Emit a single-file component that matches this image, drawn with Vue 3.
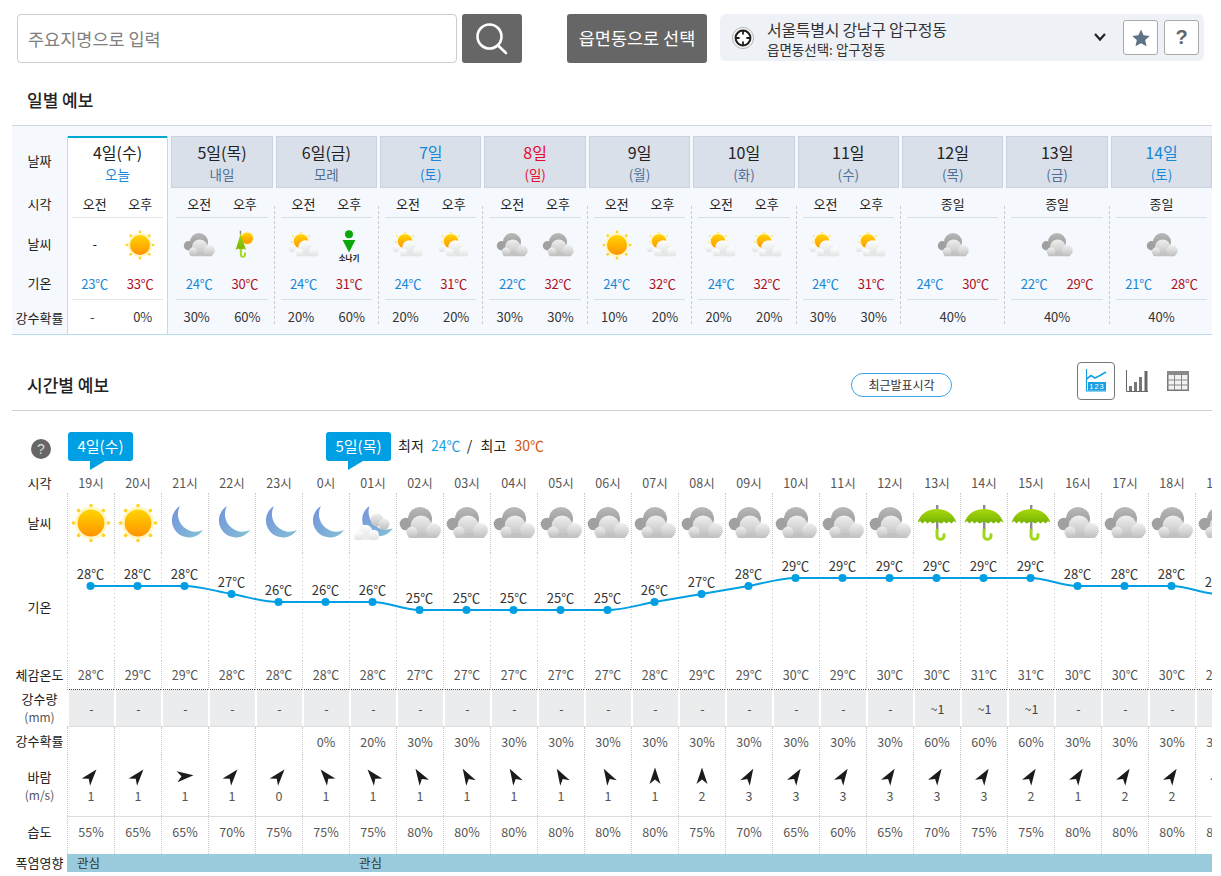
<template>
  <div class="page">
    <!-- shared icon symbols -->
    <svg class="defs" aria-hidden="true">
      <defs>
        <linearGradient id="g-sun" x1="0" y1="0" x2="0" y2="1">
          <stop offset="0" stop-color="#ffd500" />
          <stop offset="1" stop-color="#ff9300" />
        </linearGradient>
        <linearGradient id="g-moon" x1="0" y1="0" x2="1" y2="0.7">
          <stop offset="0" stop-color="#7593dc" />
          <stop offset="1" stop-color="#82bcd6" />
        </linearGradient>
        <linearGradient id="g-back" x1="0" y1="0" x2="0" y2="1">
          <stop offset="0" stop-color="#b8b8b8" />
          <stop offset="1" stop-color="#929292" />
        </linearGradient>
        <linearGradient id="g-front" x1="0" y1="0" x2="0" y2="1">
          <stop offset="0" stop-color="#f0f0f0" />
          <stop offset="1" stop-color="#bfbfbf" />
        </linearGradient>
        <linearGradient id="g-white" x1="0" y1="0" x2="0" y2="1">
          <stop offset="0" stop-color="#ffffff" />
          <stop offset="1" stop-color="#dfe1e3" />
        </linearGradient>
        <linearGradient id="g-green" x1="0" y1="0" x2="0" y2="1">
          <stop offset="0" stop-color="#a8d80e" />
          <stop offset="1" stop-color="#76b400" />
        </linearGradient>
      </defs>

      <symbol id="sun" viewBox="0 0 48 48">
        <circle cx="24" cy="24" r="16.2" fill="#fff6c4" />
        <g fill="#ffd31f">
          <circle cx="24" cy="6.5" r="1.8" /><circle cx="24" cy="41.5" r="1.8" />
          <circle cx="6.5" cy="24" r="1.8" /><circle cx="41.5" cy="24" r="1.8" />
          <circle cx="11.6" cy="11.6" r="1.8" /><circle cx="36.4" cy="11.6" r="1.8" />
          <circle cx="11.6" cy="36.4" r="1.8" /><circle cx="36.4" cy="36.4" r="1.8" />
        </g>
        <circle cx="24" cy="24" r="13.4" fill="url(#g-sun)" />
      </symbol>

      <symbol id="moon" viewBox="0 0 48 48">
        <path d="M19 7A17 17 0 1 0 42 31A17.5 17.5 0 0 1 19 7Z" fill="url(#g-moon)" />
      </symbol>

      <symbol id="cloud" viewBox="0 0 48 48">
        <circle cx="10" cy="25" r="6.3" fill="#a0a0a0" />
        <circle cx="24" cy="20" r="12" fill="url(#g-back)" />
        <circle cx="25" cy="27" r="10.5" fill="url(#g-front)" />
        <rect x="12" y="34" width="30" height="5" rx="2.5" fill="#c2c2c2" />
        <circle cx="16" cy="33" r="5.6" fill="url(#g-front)" />
        <circle cx="37.5" cy="31.5" r="7.4" fill="url(#g-front)" />
      </symbol>

      <symbol id="mooncloud" viewBox="0 0 48 48">
        <path d="M20.5 7A16.5 16.5 0 1 0 43.8 29.3A18 18 0 0 1 20.5 7Z" fill="url(#g-moon)" />
        <circle cx="28" cy="21" r="6.5" fill="url(#g-front)" />
        <circle cx="35" cy="25" r="5.5" fill="url(#g-front)" />
        <circle cx="16.5" cy="32.7" r="7" fill="url(#g-white)" />
        <rect x="5" y="36" width="25" height="5" rx="2.5" fill="#eceded" />
        <circle cx="10" cy="36.7" r="4.5" fill="url(#g-white)" />
        <circle cx="24.8" cy="36" r="5.3" fill="url(#g-white)" />
      </symbol>

      <symbol id="suncloud" viewBox="0 0 48 48">
        <g fill="#ffd31f">
          <circle cx="20" cy="7.5" r="1" /><circle cx="31" cy="12" r="1" />
          <circle cx="9" cy="12" r="1" /><circle cx="8" cy="20" r="1" />
        </g>
        <circle cx="20" cy="19" r="11" fill="#fff6c4" />
        <circle cx="20" cy="19" r="9.5" fill="url(#g-sun)" />
        <circle cx="8" cy="29" r="4.5" fill="url(#g-white)" />
        <circle cx="26" cy="27" r="9.5" fill="url(#g-white)" />
        <rect x="14" y="32" width="29" height="7" rx="3.5" fill="#e4e6e8" />
        <circle cx="18" cy="34" r="5" fill="url(#g-white)" />
        <circle cx="37" cy="33" r="6.3" fill="url(#g-white)" />
      </symbol>

      <symbol id="umbrella" viewBox="0 0 48 48">
        <rect x="23" y="6" width="2.4" height="26" fill="#8b8b8b" />
        <path d="M4.5 24C7 15 14.5 10 24 10S41 15 43.5 24L41 22L38.5 24.5L36 22.5L33.5 24.5L31 22.5L28.5 24.5L24 22.5L19.5 24.5L17 22.5L14.5 24.5L12 22L9.5 24.5L7 22Z" fill="url(#g-green)" />
        <path d="M24 31V37.5A3.6 3.6 0 0 0 31 37.5V35.5" fill="none" stroke="#a0d81c" stroke-width="3" stroke-linecap="round" />
      </symbol>

      <symbol id="umbsun" viewBox="0 0 48 48">
        <circle cx="27" cy="15" r="9" fill="#fff1b0" />
        <circle cx="27" cy="15" r="7.5" fill="url(#g-sun)" />
        <rect x="17" y="5" width="2" height="5" fill="#8b8b8b" />
        <path d="M18.2 8.4L11.6 30.7L15 28.5L18.5 31L22 28.5L25.3 30.7Z" fill="url(#g-green)" />
        <path d="M18.5 30V37.5A2.8 2.8 0 0 0 24 37.5V35" fill="none" stroke="#a0d81c" stroke-width="2.6" stroke-linecap="round" />
      </symbol>

      <symbol id="shower" viewBox="0 0 48 48">
        <circle cx="24" cy="9.7" r="5.3" fill="#0aa80a" />
        <path d="M15.5 17.3H32.5L24 34Z" fill="#0aa80a" />
        <text x="24" y="45" text-anchor="middle" font-size="10" font-weight="700" fill="#111" font-family="Noto Sans CJK KR, sans-serif">소나기</text>
      </symbol>
    </svg>

    <!-- search / location bar -->
    <div class="topbar">
      <input class="search-input" type="text" placeholder="주요지명으로 입력" />
      <button class="search-btn" type="button" aria-label="검색">
        <svg width="36" height="36" viewBox="0 0 36 36" fill="none" stroke="#fff" stroke-width="2.6" stroke-linecap="round">
          <circle cx="15.5" cy="15.5" r="12" />
          <line x1="24" y1="24.5" x2="32" y2="32" />
        </svg>
      </button>
      <button class="town-btn" type="button">읍면동으로 선택</button>
      <div class="location">
        <svg class="target" width="24" height="24" viewBox="0 0 24 24">
          <circle cx="12" cy="12" r="10.6" fill="#f2f2f2" stroke="#b9b9b9" />
          <circle cx="12" cy="12" r="7.4" fill="#fff" stroke="#1d1d1d" stroke-width="2" />
          <path d="M12 5V8.6M12 15.4V19M5 12H8.6M15.4 12H19" stroke="#1d1d1d" stroke-width="1.8" />
        </svg>
        <div class="loc-text">
          <div class="loc-main">서울특별시 강남구 압구정동</div>
          <div class="loc-sub">읍면동선택: 압구정동</div>
        </div>
        <svg class="chevron" width="14" height="10" viewBox="0 0 14 10" fill="none" stroke="#222" stroke-width="2.2">
          <path d="M2 2L7 7.5L12 2" />
        </svg>
        <button class="square-btn" type="button" aria-label="즐겨찾기">
          <svg width="20" height="20" viewBox="0 0 20 20">
            <path d="M10 1.5L12.6 7.2L18.8 7.9L14.2 12.1L15.5 18.3L10 15.2L4.5 18.3L5.8 12.1L1.2 7.9L7.4 7.2Z" fill="#5f7286" />
          </svg>
        </button>
        <button class="square-btn help" type="button">?</button>
      </div>
    </div>

    <h2 class="title daily-title">일별 예보</h2>

    <!-- daily forecast -->
    <div class="daily">
      <div class="daily-labels">
        <div class="dl tab-h up4">날짜</div>
        <div class="dl per-h">시각</div>
        <div class="dl ico-h">날씨</div>
        <div class="dl tmp-h up4">기온</div>
        <div class="dl rain-h">강수확률</div>
      </div>
      <div
        v-for="(day, i) in days"
        :key="day.date"
        class="day"
        :class="{ today: i === 0, sep: i > 1 }"
      >
        <div class="tab tab-h" :class="day.tone">
          <div class="tab-date">{{ day.date }}</div>
          <div class="tab-sub">{{ day.sub }}</div>
        </div>
        <div class="drow per-h line per-row">
          <span v-for="c in day.cols" :key="c.per" class="dcell">{{ c.per }}</span>
        </div>
        <div class="drow ico-h">
          <span v-for="c in day.cols" :key="c.per" class="dcell">
            <svg v-if="c.icon" class="ic-day"><use :href="'#' + c.icon" /></svg>
            <template v-else>-</template>
          </span>
        </div>
        <div class="drow tmp-h line">
          <template v-for="t in day.temps" :key="t.v">
            <span class="dcell temp" :class="t.cls">{{ t.v }}</span>
          </template>
        </div>
        <div class="drow rain-h rain-row">
          <span v-for="(r, j) in day.rain" :key="j" class="dcell rain">{{ r }}</span>
        </div>
      </div>
    </div>

    <!-- hourly forecast -->
    <div class="hourly-head">
      <h2 class="title">시간별 예보</h2>
      <button class="latest" type="button">최근발표시각</button>
      <div class="views">
        <button class="view active" type="button" aria-label="그래프">
          <svg width="22" height="23" viewBox="0 0 22 23" fill="none">
            <path d="M1.5 0V22H21" stroke="#18a0e2" stroke-width="1.2" />
            <path d="M1.5 10L6 6.5L10 9L15 6.5L21 3" stroke="#18a0e2" stroke-width="1.6" />
            <rect x="3" y="13" width="18" height="8.5" fill="#18a0e2" />
            <text x="12" y="20" text-anchor="middle" font-size="7.5" letter-spacing="1" fill="#fff" font-family="Liberation Sans, sans-serif">123</text>
          </svg>
        </button>
        <button class="view" type="button" aria-label="막대">
          <svg width="22" height="22" viewBox="0 0 22 22" fill="none">
            <path d="M.5 0V21.5H22" stroke="#666" />
            <rect x="3" y="16" width="3" height="5" fill="#777" />
            <rect x="8" y="12" width="3" height="9" fill="#777" />
            <rect x="13" y="7" width="3" height="14" fill="#777" />
            <rect x="18.5" y="1" width="3" height="20" fill="#666" />
          </svg>
        </button>
        <button class="view" type="button" aria-label="표">
          <svg width="22" height="20" viewBox="0 0 22 20" fill="none">
            <rect x=".75" y=".75" width="20.5" height="18.5" fill="#f2f2f2" stroke="#777" stroke-width="1.5" />
            <rect x="0" y="0" width="22" height="4" fill="#8a8a8a" />
            <path d="M7.5 0V20M14.5 0V20M0 9H22M0 14H22" stroke="#888" />
          </svg>
        </button>
      </div>
    </div>

    <div class="bubbles">
      <div class="help-dot">?</div>
      <div class="bubble first">4일(수)</div>
      <div class="bubble second">5일(목)</div>
      <div class="minmax">
        최저 <span class="low">24℃</span> &nbsp;/&nbsp; <span class="high-label">최고</span> <span class="high">30℃</span>
      </div>
    </div>

    <div class="hours">
      <div class="hrow h-time">
        <div class="hl">시각</div>
        <div v-for="(h, i) in hours" :key="i" class="hc plain">{{ h.time }}</div>
      </div>
      <div class="hrow h-icon">
        <div class="hl">날씨</div>
        <div v-for="(h, i) in hours" :key="i" class="hc">
          <svg class="ic-hour"><use :href="'#' + h.icon" /></svg>
        </div>
      </div>
      <div class="hrow h-chart">
        <div class="hl">기온</div>
        <svg class="chart" :width="hours.length * 47" height="107">
          <line
            v-for="(h, i) in hours"
            :key="i"
            :x1="i * 47 + 0.5"
            y1="0"
            :x2="i * 47 + 0.5"
            y2="107"
            stroke="#c4c4c4"
            stroke-dasharray="1 3"
          />
          <path :d="linePath" fill="none" stroke="#009fe3" stroke-width="2" />
          <g v-for="(p, i) in points" :key="i">
            <circle :cx="p.x" :cy="p.y" r="4" fill="#009fe3" />
            <text :x="p.x" :y="p.y - 7.5" text-anchor="middle" class="chart-label">{{ p.t }}℃</text>
          </g>
        </svg>
      </div>
      <div class="hrow h-feel">
        <div class="hl">체감온도</div>
        <div v-for="(h, i) in hours" :key="i" class="hc">{{ h.feel }}</div>
      </div>
      <div class="hrow h-amount">
        <div class="hl">강수량<small>(mm)</small></div>
        <div v-for="(h, i) in hours" :key="i" class="hc grey">{{ h.amount }}</div>
      </div>
      <div class="hrow h-prob">
        <div class="hl">강수확률</div>
        <div v-for="(h, i) in hours" :key="i" class="hc">{{ h.prob }}</div>
      </div>
      <div class="hrow h-wind">
        <div class="hl">바람<small>(m/s)</small></div>
        <div v-for="(h, i) in hours" :key="i" class="hc wind">
          <svg
            class="arrow"
            width="20"
            height="20"
            viewBox="0 0 20 20"
            :style="{ transform: `rotate(${h.dir}deg)` }"
          >
            <path d="M10 1.5L15.5 18L10 13.5L4.5 18Z" fill="#1b1b1b" />
          </svg>
          <span class="speed">{{ h.speed }}</span>
        </div>
      </div>
      <div class="hrow h-hum">
        <div class="hl">습도</div>
        <div v-for="(h, i) in hours" :key="i" class="hc">{{ h.hum }}</div>
      </div>
      <div class="hrow h-heat">
        <div class="hl">폭염영향</div>
        <div class="heat-bar">
          <span v-for="(h, i) in hours" :key="i" class="heat-cell">{{ i === 0 || i === 6 ? '관심' : '' }}</span>
        </div>
      </div>
    </div>
  </div>
</template>

<script setup>
import { computed } from 'vue'

function day(date, sub, tone, icons, lows, rain) {
  const allDay = icons.length === 1
  return {
    date,
    sub,
    tone,
    cols: allDay
      ? [{ per: '종일', icon: icons[0] }]
      : [{ per: '오전', icon: icons[0] }, { per: '오후', icon: icons[1] }],
    temps: [{ v: lows[0] + '℃', cls: 'low' }, { v: lows[1] + '℃', cls: 'high' }],
    rain,
  }
}

const days = [
  day('4일(수)', '오늘', 'today-tab', [null, 'sun'], [23, 33], ['-', '0%']),
  day('5일(목)', '내일', '', ['cloud', 'umbsun'], [24, 30], ['30%', '60%']),
  day('6일(금)', '모레', '', ['suncloud', 'shower'], [24, 31], ['20%', '60%']),
  day('7일', '(토)', 'sat', ['suncloud', 'suncloud'], [24, 31], ['20%', '20%']),
  day('8일', '(일)', 'sun-day', ['cloud', 'cloud'], [22, 32], ['30%', '30%']),
  day('9일', '(월)', '', ['sun', 'suncloud'], [24, 32], ['10%', '20%']),
  day('10일', '(화)', '', ['suncloud', 'suncloud'], [24, 32], ['20%', '20%']),
  day('11일', '(수)', '', ['suncloud', 'suncloud'], [24, 31], ['30%', '30%']),
  day('12일', '(목)', '', ['cloud'], [24, 30], ['40%']),
  day('13일', '(금)', '', ['cloud'], [22, 29], ['40%']),
  day('14일', '(토)', 'sat', ['cloud'], [21, 28], ['40%']),
]

const times = ['19시', '20시', '21시', '22시', '23시', '0시', '01시', '02시', '03시', '04시', '05시', '06시', '07시', '08시', '09시', '10시', '11시', '12시', '13시', '14시', '15시', '16시', '17시', '18시', '19시']
const temps = [28, 28, 28, 27, 26, 26, 26, 25, 25, 25, 25, 25, 26, 27, 28, 29, 29, 29, 29, 29, 29, 28, 28, 28, 27]
const feels = [28, 29, 29, 28, 28, 28, 28, 27, 27, 27, 27, 27, 28, 29, 29, 30, 29, 30, 30, 31, 31, 30, 30, 30, 29]
const probs = ['', '', '', '', '', '0%', '20%', '30%', '30%', '30%', '30%', '30%', '30%', '30%', '30%', '30%', '30%', '30%', '60%', '60%', '60%', '30%', '30%', '30%', '30%']
const dirs = [40, 40, 85, 40, 40, -40, -40, -32, -30, -30, -30, -30, 0, 0, 30, 33, 33, 33, 33, 33, 33, 33, 33, 33, 33]
const speeds = [1, 1, 1, 1, 0, 1, 1, 1, 1, 1, 1, 1, 1, 2, 3, 3, 3, 3, 3, 3, 2, 1, 2, 2, 2]
const hums = [55, 65, 65, 70, 75, 75, 75, 80, 80, 80, 80, 80, 80, 75, 70, 65, 60, 65, 70, 75, 75, 80, 80, 80, 80]

function iconAt(i) {
  if (i < 2) return 'sun'
  if (i < 6) return 'moon'
  if (i === 6) return 'mooncloud'
  if (i >= 18 && i <= 20) return 'umbrella'
  return 'cloud'
}

const hours = times.map((time, i) => ({
  time,
  icon: iconAt(i),
  feel: feels[i] + '℃',
  amount: i >= 18 && i <= 20 ? '~1' : '-',
  prob: probs[i],
  dir: dirs[i],
  speed: speeds[i],
  hum: hums[i] + '%',
}))

const points = temps.map((t, i) => ({ t, x: 23.5 + i * 47, y: 33 + (28 - t) * 8 }))

// monotone curve through the hourly temperatures
const linePath = computed(() => {
  const slope = (i) => {
    if (i === 0 || i === points.length - 1) return 0
    const a = points[i].y - points[i - 1].y
    const b = points[i + 1].y - points[i].y
    return a * b <= 0 ? 0 : (a + b) / 2
  }
  let d = `M${points[0].x} ${points[0].y}`
  for (let i = 1; i < points.length; i++) {
    const p0 = points[i - 1]
    const p1 = points[i]
    d += `C${p0.x + 16} ${p0.y + slope(i - 1) / 3} ${p1.x - 16} ${p1.y - slope(i) / 3} ${p1.x} ${p1.y}`
  }
  return d
})
</script>

<style>
html, body { margin: 0; background: #fff; }
</style>

<style scoped>
.page {
  width: 1212px;
  height: 876px;
  overflow: hidden;
  color: #222;
  font-family: "Noto Sans CJK KR", "Noto Sans", sans-serif;
  font-size: 13px;
}
.defs { display: block; width: 0; height: 0; overflow: hidden; }

.topbar { display: flex; align-items: flex-start; padding: 14px 0 0 17px; height: 49px; }
.search-input {
  width: 440px;
  height: 49px;
  box-sizing: border-box;
  border: 1px solid #ccc;
  border-radius: 4px;
  padding: 0 10px;
  font: 17.5px "Noto Sans CJK KR", sans-serif;
  color: #333;
  outline: none;
}
.search-input::placeholder { color: #808080; opacity: 1; }
.search-btn {
  width: 60px;
  height: 49px;
  margin-left: 5px;
  padding: 0;
  border: 0;
  border-radius: 3px;
  background: #666;
  display: flex;
  align-items: center;
  justify-content: center;
}
.town-btn {
  width: 140px;
  height: 49px;
  margin-left: 45px;
  padding: 0 0 2px;
  border: 0;
  border-radius: 3px;
  background: #666;
  color: #fff;
  font: 17.5px "Noto Sans CJK KR", sans-serif;
}
.location {
  display: flex;
  align-items: center;
  width: 484px;
  height: 47px;
  margin-left: 13px;
  box-sizing: border-box;
  padding: 0 5px 0 11px;
  border-radius: 6px;
  background: #eef1f6;
}
.target { flex: none; }
.loc-text { margin-left: 12px; flex: 1; line-height: 20px; padding-top: 2px; }
.loc-main { font-size: 16px; letter-spacing: -.3px; color: #333; }
.loc-sub { font-size: 13.5px; color: #333; }
.chevron { margin-right: 10px; margin-top: -2px; }
.square-btn {
  width: 35px;
  height: 35px;
  margin-left: 6px;
  padding: 0;
  border: 1px solid #aaa;
  border-radius: 3px;
  background: #fff;
  display: flex;
  align-items: center;
  justify-content: center;
}
.help { font: 700 20px "Liberation Sans", sans-serif; color: #666; }

.title { margin: 0; font-size: 17px; font-weight: 500; line-height: 24px; color: #222; }
.daily-title { margin: 25px 0 13px 27px; }

.daily {
  display: flex;
  margin-left: 12px;
  height: 198px;
  padding-top: 10px;
  background: #f5f8fc;
  border-top: 1px solid #d3d6da;
  border-bottom: 1px solid #b6def4;
}
.daily-labels { width: 55px; flex: none; }
.dl { display: flex; align-items: center; justify-content: center; font-size: 13px; box-sizing: border-box; }
.dl.up4 { padding-bottom: 4px; }

.tab-h { height: 52px; }
.per-h { height: 30px; }
.ico-h { height: 50px; }
.tmp-h { height: 32px; }
.rain-h { height: 34px; }

.day {
  position: relative;
  flex: none;
  width: 101.4px;
  margin-right: 3px;
}
.day.today {
  background: #fff;
  box-sizing: border-box;
  width: 101px;
  border-left: 1px solid #b6def4;
  border-right: 1px solid #b6def4;
  margin-right: 3.3px;
  height: 198px;
}
.day.sep::before {
  content: "";
  position: absolute;
  left: -2px;
  top: 70px;
  height: 118px;
  border-left: 1px dashed #ccc;
}
.tab {
  box-sizing: border-box;
  text-align: center;
  background: #d9e0e9;
  border: 1px solid #c9d3df;
  color: #222;
  padding-top: 4px;
}
.tab.today-tab { background: #fff; border: 0; border-top: 2px solid #00a8d2; padding-top: 3px; }
.tab-date { font-size: 16px; line-height: 22px; }
.tab-sub { font-size: 13.5px; line-height: 22px; color: #4f7097; }
.today-tab .tab-sub { color: #1787d8; }
.sat .tab-date, .sat .tab-sub { color: #1787d8; }
.sun-day .tab-date, .sun-day .tab-sub { color: #e60b2e; }

.drow { display: flex; margin: 0 5px; box-sizing: border-box; }
.today .drow { margin: 0 4px; }
.drow.line { border-bottom: 1px solid #d8dee6; }
.per-row { padding-top: 1px; }
.dcell { flex: 1; display: flex; align-items: center; justify-content: center; font-size: 13px; }
.today .drow.line { border-bottom-color: #e6e6e6; }
.ic-day { width: 36px; height: 36px; display: block; margin-top: 4px; }
.temp { font-size: 13px; letter-spacing: -.2px; }
.temp.low { color: #1787d8; }
.temp.high { color: #b0101c; }
.rain { color: #333; }
.rain-row { padding-bottom: 2px; }
.rain:first-child:not(:only-child) { padding-right: 6px; }
.rain:last-child:not(:only-child) { padding-left: 4px; }

.hourly-head { display: flex; align-items: center; height: 76px; box-sizing: border-box; margin: 0 0 0 12px; padding: 24px 0 0 15px; border-bottom: 1px solid #d0d0d0; }
.latest {
  width: 101px;
  height: 24px;
  margin-left: 742px;
  padding: 0;
  border: 1px solid #38a6e8;
  border-radius: 12px;
  background: #fff;
  color: #333;
  font: 12px "Noto Sans CJK KR", sans-serif;
}
.views { display: flex; gap: 3px; margin-left: 125px; margin-top: -8px; }
.view {
  width: 38px;
  height: 38px;
  padding: 0;
  border: 1px solid transparent;
  border-radius: 4px;
  background: #fff;
  display: flex;
  align-items: center;
  justify-content: center;
}
.view.active { border-color: #777; }

.bubbles { display: flex; align-items: flex-start; height: 61px; box-sizing: border-box; padding-top: 21px; }
.help-dot {
  width: 20px;
  height: 20px;
  margin: 7px 16px 0 31px;
  border-radius: 50%;
  background: #666;
  color: #ddd;
  font: 14px/20px "Liberation Sans", sans-serif;
  text-align: center;
}
.bubble {
  position: relative;
  width: 65px;
  height: 29px;
  border-radius: 3px;
  background: #009fe3;
  color: #fff;
  font-size: 15px;
  line-height: 27px;
  text-align: center;
}
.bubble::after {
  content: "";
  position: absolute;
  left: 22px;
  top: 29px;
  border-top: 9px solid #009fe3;
  border-right: 15px solid transparent;
}
.bubble.first { margin-left: 1px; }
.bubble.second { margin-left: 193px; }
.minmax { margin-left: 7px; font-size: 14px; line-height: 27px; color: #222; }
.minmax .low { color: #19a0e6; margin-left: 4px; }
.minmax .high-label { margin-left: 2px; }
.minmax .high { color: #d4540e; margin-left: 5px; }

.hours { overflow: hidden; }
.hrow { display: flex; width: 1300px; box-sizing: border-box; }
.hl {
  flex: none;
  width: 55px;
  margin-left: 12px;
  display: flex;
  flex-direction: column;
  align-items: center;
  justify-content: center;
  font-size: 13px;
  line-height: 18px;
  color: #222;
}
.hl small { font-size: 12px; color: #555; }
.hc {
  flex: none;
  width: 47px;
  box-sizing: border-box;
  border-left: 1px dotted #c9c9c9;
  display: flex;
  align-items: center;
  justify-content: center;
  font-size: 12.5px;
  color: #555;
}
.hc.plain { border-left-color: transparent; }
.h-time { height: 21px; }
.h-icon { height: 60px; }
.ic-hour { width: 48px; height: 48px; flex: none; margin-left: -1px; display: block; }
.h-chart { height: 107px; }
.chart { flex: none; display: block; }
.chart-label { font-size: 13px; fill: #333; }
.h-feel { height: 30px; }
.h-feel .hc { border-bottom: 1px dotted #444; }
.h-amount, .h-wind { background: linear-gradient(#ddd, #ddd) 67px 100% / 100% 1px no-repeat; }
.h-amount { height: 37px; padding-bottom: 1px; }
.hc.grey { background: #ebecee; border-left: 2px solid #fff; color: #444; }
.h-prob { height: 28px; }
.h-wind { height: 62px; padding-bottom: 1px; }
.wind { flex-direction: column; justify-content: flex-start; padding-top: 11px; }
.arrow { display: block; }
.speed { line-height: 20px; }
.h-hum { height: 37px; }
.h-hum .hc, .h-hum .hl { padding-bottom: 8px; }
.h-heat { height: 18px; }
.heat-bar { display: flex; flex: none; background: #99cbdc; }
.heat-cell { flex: none; width: 47px; box-sizing: border-box; padding-left: 10px; font-size: 12.5px; line-height: 18px; color: #333; white-space: nowrap; }
</style>
